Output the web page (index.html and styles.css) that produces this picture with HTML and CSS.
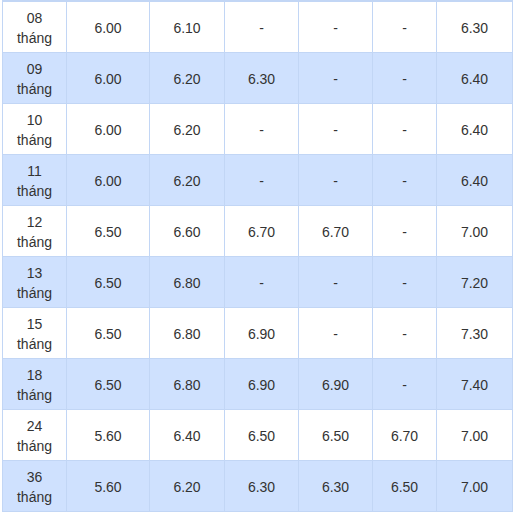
FILE: index.html
```html
<!DOCTYPE html>
<html lang="vi">
<head>
<meta charset="utf-8">
<title>Lãi suất</title>
<link rel="stylesheet" href="styles.css">
</head>
<body>
<table class="rates">
  <colgroup>
    <col class="c-term">
    <col class="c-a">
    <col class="c-b">
    <col class="c-c">
    <col class="c-d">
    <col class="c-e">
    <col class="c-f">
  </colgroup>
  <tbody>
    <tr><td>08 tháng</td><td>6.00</td><td>6.10</td><td>-</td><td>-</td><td>-</td><td>6.30</td></tr>
    <tr class="alt"><td>09 tháng</td><td>6.00</td><td>6.20</td><td>6.30</td><td>-</td><td>-</td><td>6.40</td></tr>
    <tr><td>10 tháng</td><td>6.00</td><td>6.20</td><td>-</td><td>-</td><td>-</td><td>6.40</td></tr>
    <tr class="alt"><td>11 tháng</td><td>6.00</td><td>6.20</td><td>-</td><td>-</td><td>-</td><td>6.40</td></tr>
    <tr><td>12 tháng</td><td>6.50</td><td>6.60</td><td>6.70</td><td>6.70</td><td>-</td><td>7.00</td></tr>
    <tr class="alt"><td>13 tháng</td><td>6.50</td><td>6.80</td><td>-</td><td>-</td><td>-</td><td>7.20</td></tr>
    <tr><td>15 tháng</td><td>6.50</td><td>6.80</td><td>6.90</td><td>-</td><td>-</td><td>7.30</td></tr>
    <tr class="alt"><td>18 tháng</td><td>6.50</td><td>6.80</td><td>6.90</td><td>6.90</td><td>-</td><td>7.40</td></tr>
    <tr><td>24 tháng</td><td>5.60</td><td>6.40</td><td>6.50</td><td>6.50</td><td>6.70</td><td>7.00</td></tr>
    <tr class="alt"><td>36 tháng</td><td>5.60</td><td>6.20</td><td>6.30</td><td>6.30</td><td>6.50</td><td>7.00</td></tr>
  </tbody>
</table>
</body>
</html>
```
FILE: styles.css
```css
html, body {
  margin: 0;
  padding: 0;
  background: #ffffff;
}
body {
  font-family: "Liberation Sans", Arial, sans-serif;
  font-size: 14px;
  line-height: 20px;
  color: #333333;
}
.rates {
  margin-left: 2px;
  width: 510px;
  border-collapse: collapse;
  table-layout: fixed;
}
.c-term { width: 64px; }
.c-a { width: 83px; }
.c-b { width: 75px; }
.c-c { width: 74px; }
.c-d { width: 74px; }
.c-e { width: 64px; }
.c-f { width: 76px; }
.rates td {
  border: 1px solid #c2d6f5;
  padding: 6px 8px 4px;
  height: 40px;
  text-align: center;
  vertical-align: middle;
}
.rates tr:first-child td {
  border-top-width: 2px;
}
.rates tr.alt td {
  background: #cfe1fe;
}
```
